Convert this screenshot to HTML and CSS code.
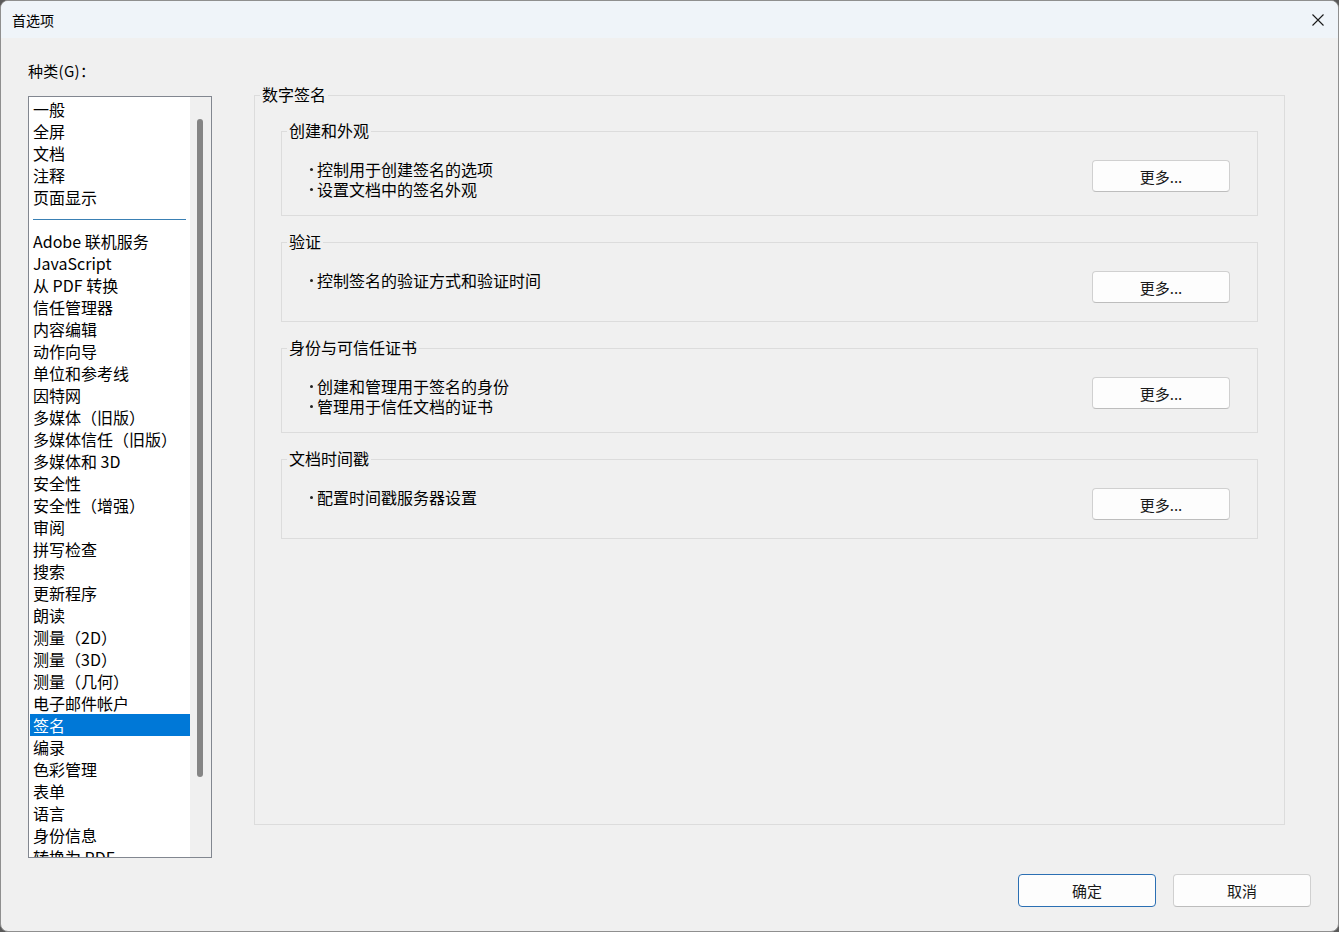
FILE: index.html
```html
<!DOCTYPE html>
<html lang="zh-CN">
<head>
<meta charset="utf-8">
<title>首选项</title>
<link rel="stylesheet" href="styles.css">
</head>
<body>
<div class="window">
  <div class="titlebar">
    <span class="title">首选项</span>
    <div class="close">
      <svg width="12" height="12" viewBox="0 0 12 12"><path d="M0.5 0.5 L11.5 11.5 M11.5 0.5 L0.5 11.5" stroke="#1a1a1a" stroke-width="1.1" fill="none"/></svg>
    </div>
  </div>
  <div class="content">
    <div class="main">
      <div class="left">
        <div class="label">种类(G)：</div>
        <div class="listbox">
          <div class="items">
            <div class="item">一般</div>
            <div class="item">全屏</div>
            <div class="item">文档</div>
            <div class="item">注释</div>
            <div class="item">页面显示</div>
            <div class="sep"><div class="sep-line"></div></div>
            <div class="item">Adobe 联机服务</div>
            <div class="item">JavaScript</div>
            <div class="item">从 PDF 转换</div>
            <div class="item">信任管理器</div>
            <div class="item">内容编辑</div>
            <div class="item">动作向导</div>
            <div class="item">单位和参考线</div>
            <div class="item">因特网</div>
            <div class="item">多媒体（旧版）</div>
            <div class="item">多媒体信任（旧版）</div>
            <div class="item">多媒体和 3D</div>
            <div class="item">安全性</div>
            <div class="item">安全性（增强）</div>
            <div class="item">审阅</div>
            <div class="item">拼写检查</div>
            <div class="item">搜索</div>
            <div class="item">更新程序</div>
            <div class="item">朗读</div>
            <div class="item">测量（2D）</div>
            <div class="item">测量（3D）</div>
            <div class="item">测量（几何）</div>
            <div class="item">电子邮件帐户</div>
            <div class="item selected">签名</div>
            <div class="item">编录</div>
            <div class="item">色彩管理</div>
            <div class="item">表单</div>
            <div class="item">语言</div>
            <div class="item">身份信息</div>
            <div class="item">转换为 PDF</div>
          </div>
          <div class="scrollbar"><div class="thumb"></div></div>
        </div>
      </div>
      <fieldset class="group">
        <legend>数字签名</legend>
        <div class="group-body">
          <fieldset class="sub tall">
            <legend>创建和外观</legend>
            <div class="sub-body">
              <div class="bullets">
                <div class="line"><span class="dot"></span>控制用于创建签名的选项</div>
                <div class="line"><span class="dot"></span>设置文档中的签名外观</div>
              </div>
              <button class="more">更多...</button>
            </div>
          </fieldset>
          <fieldset class="sub short">
            <legend>验证</legend>
            <div class="sub-body">
              <div class="bullets">
                <div class="line"><span class="dot"></span>控制签名的验证方式和验证时间</div>
              </div>
              <button class="more">更多...</button>
            </div>
          </fieldset>
          <fieldset class="sub tall">
            <legend>身份与可信任证书</legend>
            <div class="sub-body">
              <div class="bullets">
                <div class="line"><span class="dot"></span>创建和管理用于签名的身份</div>
                <div class="line"><span class="dot"></span>管理用于信任文档的证书</div>
              </div>
              <button class="more">更多...</button>
            </div>
          </fieldset>
          <fieldset class="sub short">
            <legend>文档时间戳</legend>
            <div class="sub-body">
              <div class="bullets">
                <div class="line"><span class="dot"></span>配置时间戳服务器设置</div>
              </div>
              <button class="more">更多...</button>
            </div>
          </fieldset>
        </div>
      </fieldset>
    </div>
    <div class="footer">
      <button class="btn primary">确定</button>
      <button class="btn">取消</button>
    </div>
  </div>
</div>
</body>
</html>
```
FILE: styles.css
```css
html, body {
  margin: 0;
  padding: 0;
  background: #5a5a5a;
}
body {
  font-family: "Noto Sans CJK SC", "Microsoft YaHei", sans-serif;
  color: #000;
}
.window {
  width: 1339px;
  height: 932px;
  box-sizing: border-box;
  border: 1px solid #8f8f8f;
  border-radius: 8px;
  overflow: hidden;
  background: #f0f0f0;
}
.titlebar {
  height: 37px;
  background: #eff4f9;
  display: flex;
  align-items: center;
  justify-content: space-between;
  padding-left: 11px;
}
.title {
  font-size: 14px;
  line-height: 20px;
}
.close {
  width: 40px;
  height: 37px;
  display: flex;
  align-items: center;
  justify-content: center;
}
.content {
  padding: 22px 0 0 27px;
}
.main {
  display: flex;
  align-items: flex-start;
}
.left {
  width: 184px;
}
.label {
  font-size: 15px;
  line-height: 22px;
  height: 22px;
  letter-spacing: 0.3px;
}
.listbox {
  margin-top: 14px;
  height: 762px;
  box-sizing: border-box;
  border: 1px solid #828790;
  background: #fff;
  display: flex;
  overflow: hidden;
}
.items {
  flex: 1;
  padding-top: 1px;
  overflow: hidden;
}
.item {
  height: 22px;
  line-height: 22px;
  font-size: 16px;
  padding-left: 3px;
  margin-left: 1px;
  white-space: nowrap;
}
.item.selected {
  background: #0078d7;
  color: #fff;
}
.sep {
  height: 22px;
  box-sizing: border-box;
  padding: 11px 4px 0 4px;
}
.sep-line {
  height: 1px;
  background: #3a80b4;
}
.scrollbar {
  width: 21px;
  background: #f0f0f0;
}
.thumb {
  margin: 22px 0 0 7px;
  width: 6px;
  height: 658px;
  border-radius: 3px;
  background: #858585;
}
fieldset {
  margin: 0;
  padding: 0;
  min-inline-size: 0;
  box-sizing: border-box;
  border: 1px solid #dcdcdc;
}
legend {
  font-size: 16px;
  line-height: 22px;
  padding: 0 2px;
  margin-left: 5px;
  position: relative;
  top: -1px;
}
.group {
  margin-left: 42px;
  margin-top: 24px;
  width: 1031px;
  height: 741px;
}
.group-body {
  padding: 14px 26px 0 26px;
}
.sub {
  width: 977px;
  margin-bottom: 15px;
}
.sub.tall { height: 96px; }
.sub.short { height: 91px; }
.sub-body {
  display: flex;
  justify-content: space-between;
  align-items: flex-start;
  padding: 17px 27px 0 27px;
}
.bullets {
  font-size: 16px;
  line-height: 20px;
}
.line {
  display: flex;
  align-items: center;
  white-space: nowrap;
}
.dot {
  width: 8px;
  height: 20px;
  display: flex;
  align-items: center;
}
.dot::before {
  content: "";
  width: 3px;
  height: 3px;
  border-radius: 50%;
  background: #222;
  margin-left: 1px;
  margin-top: 1px;
}
.more, .btn {
  font-family: "Noto Sans CJK SC", "Microsoft YaHei", sans-serif;
  font-size: 15px;
  color: #1a1a1a;
  background: #fdfdfd;
  border: 1px solid #d0d0d0;
  border-bottom-color: #bdbdbd;
  border-radius: 4px;
  padding: 0;
}
.more {
  width: 138px;
  height: 32px;
  margin-top: 1px;
}
.footer {
  display: flex;
  justify-content: flex-end;
  gap: 17px;
  padding-right: 27px;
  margin-top: 16px;
}
.btn {
  width: 138px;
  height: 33px;
}
.btn.primary {
  border: 1px solid #2b6fb3;
}
```
